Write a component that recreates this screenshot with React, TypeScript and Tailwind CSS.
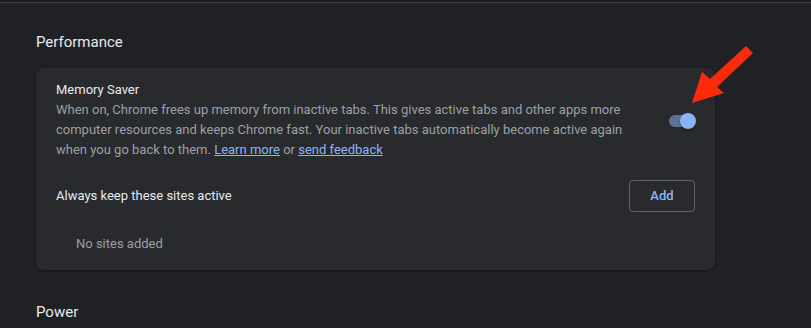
import React from "react";

export default function App() {
  return (
    <div className="relative w-[811px] h-[328px] overflow-hidden bg-[#202124]" style={{ fontFamily: "Roboto, 'Liberation Sans', sans-serif" }}>
      <div className="h-[2px] bg-[#1b1c1e]" />
      <div className="h-[1px] bg-[#3c3d40]" />
      <div className="pl-[36px] w-[715px]">
        <div className="pt-[29px] text-[15px] leading-[20px] text-[#e8eaed]">Performance</div>
        <div className="mt-[16px] rounded-[8px] bg-[#292a2d] shadow-[0_1px_3px_rgba(0,0,0,0.4)] h-[202px]">
          <div className="flex items-center pl-[20px] pr-[20px] pt-[12px]">
            <div className="flex-1">
              <div className="text-[13px] leading-[20px] text-[#e8eaed]">Memory Saver</div>
              <p className="text-[13px] leading-[20px] text-[#9aa0a6] w-[580px]">
                When on, Chrome frees up memory from inactive tabs. This gives active tabs and other apps more computer resources and keeps Chrome fast. Your inactive tabs automatically become active again when you go back to them. <span className="text-[#8ab4f8] underline">Learn more</span> or <span className="text-[#8ab4f8] underline">send feedback</span>
              </p>
            </div>
            <div className="relative w-[30px] h-[18px] mt-[2px]">
              <div className="absolute left-[4px] top-[3px] w-[24px] h-[12px] rounded-full bg-[#5b7296]" />
              <div className="absolute left-[15px] top-[1px] w-[16px] h-[16px] rounded-full bg-[#8ab4f8] shadow-[0_1px_2px_rgba(0,0,0,0.4)]" />
            </div>
          </div>
          <div className="flex items-center justify-between pl-[20px] pr-[20px] mt-[20px]">
            <div className="text-[13px] leading-[20px] text-[#e8eaed]">Always keep these sites active</div>
            <div className="w-[66px] h-[32px] rounded-[4px] border border-[#5f6368] flex items-center justify-center text-[13px] font-medium text-[#8ab4f8]">Add</div>
          </div>
          <div className="pl-[40px] mt-[22px] text-[13px] leading-[20px] text-[#9aa0a6]">No sites added</div>
        </div>
        <div className="mt-[32px] text-[15px] leading-[20px] text-[#e8eaed]">Power</div>
      </div>
      <svg className="absolute left-0 top-0" width="811" height="328" viewBox="0 0 811 328">
        <polygon points="692,103 702,72 710,79 746,46 753,53 717,87 724,93" fill="#ff2a0c" />
      </svg>
    </div>
  );
}
